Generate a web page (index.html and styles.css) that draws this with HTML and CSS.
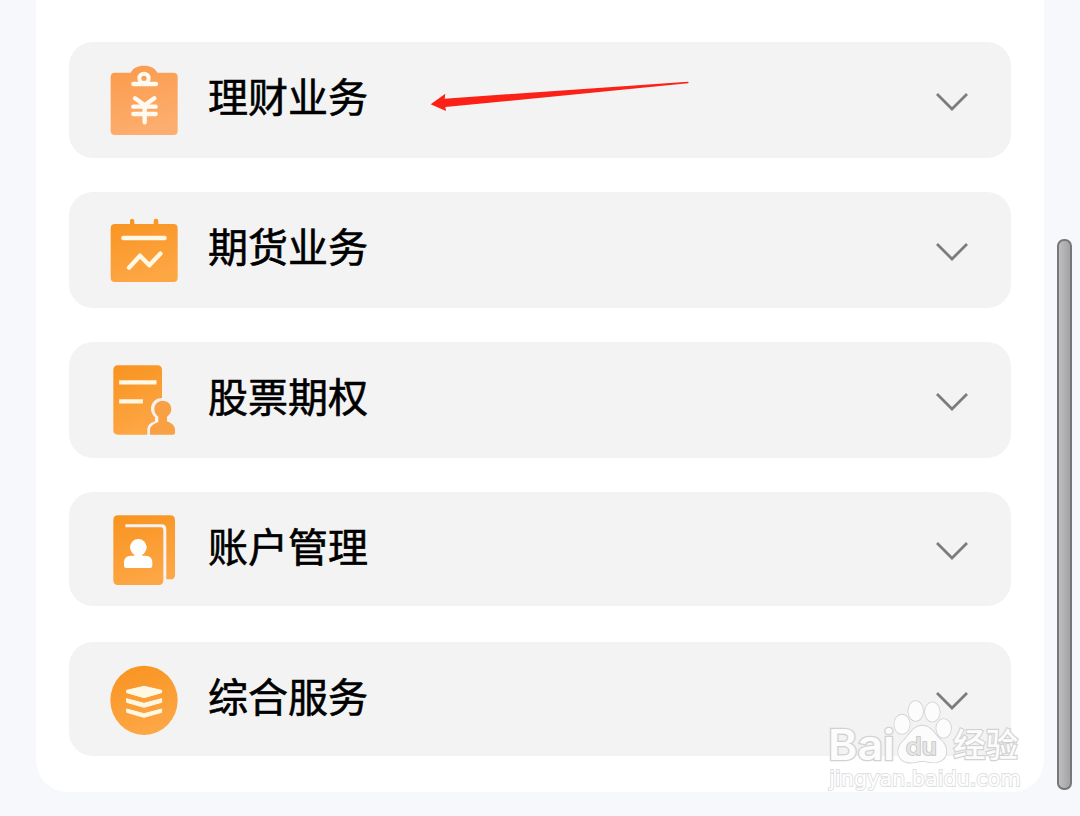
FILE: index.html
```html
<!DOCTYPE html>
<html lang="zh-CN">
<head>
    <meta charset="UTF-8">
    <meta name="viewport" content="width=device-width, initial-scale=1.0">
    <title>业务办理</title>
    <link rel="stylesheet" href="styles.css">
</head>
<body>
    <svg class="defs" width="0" height="0">
        <linearGradient id="orange" x1="0" y1="0" x2="0.3" y2="1">
            <stop offset="0" stop-color="#f8931f"/>
            <stop offset="1" stop-color="#fda644"/>
        </linearGradient>
        <linearGradient id="peach" x1="0" y1="0" x2="0.3" y2="1">
            <stop offset="0" stop-color="#fa9a4b"/>
            <stop offset="1" stop-color="#fdad6e"/>
        </linearGradient>
    </svg>

    <main class="panel">
        <div class="row">
            <svg class="icon" viewBox="0 0 300 270">
                <path fill="url(#peach)" d="M60 53H107C115 38 128 32 147 32S179 38 187 53H235Q248 53 248 66V227Q248 240 235 240H60Q47 240 47 227V66Q47 53 60 53Z"/>
                <g fill="none" stroke="#fffaf0" stroke-linecap="round" stroke-linejoin="round">
                    <circle cx="147" cy="70" r="14" stroke-width="12"/>
                    <path stroke-width="13" d="M115 87H183"/>
                    <path stroke-width="13" d="M120 130L149 151L178 130M115 155H182M115 177H182M149 153V202"/>
                </g>
            </svg>
            <span class="label">理财业务</span>
            <svg class="chevron" viewBox="0 0 34 20"><path d="M2 2L17 17L32 2"/></svg>
        </div>
        <div class="row">
            <svg class="icon" viewBox="0 0 300 270">
                <path fill="url(#orange)" d="M60 57H105V48Q105 41 111 41T118 48V57H176V48Q176 41 183 41T190 48V57H235Q248 57 248 70V218Q248 231 235 231H60Q47 231 47 218V70Q47 57 60 57Z"/>
                <g fill="none" stroke="#fff8e5" stroke-width="13" stroke-linecap="round" stroke-linejoin="round">
                    <path d="M85 99H209"/>
                    <path d="M102 188L135 152L163 181L196 146"/>
                </g>
            </svg>
            <span class="label">期货业务</span>
            <svg class="chevron" viewBox="0 0 34 20"><path d="M2 2L17 17L32 2"/></svg>
        </div>
        <div class="row">
            <svg class="icon" viewBox="0 0 300 270">
                <path fill="url(#orange)" d="M69 31H187Q201 31 201 45V129C182 129 168 143 168 161C168 172 173 180 180 187V199C166 204 157 210 157 225V239H69Q55 239 55 225V45Q55 31 69 31Z"/>
                <path fill="#f9a045" d="M203 137C219 137 229 148 229 162C229 173 223 179 216 185V199C230 205 240 211 240 225V233Q240 239 234 239H165V225C165 213 176 207 190 201V185C183 179 178 173 178 162C178 148 188 137 203 137Z"/>
                <path fill="none" stroke="#fff8e5" stroke-width="13" stroke-linecap="square" d="M79 82H178M79 139H137"/>
            </svg>
            <span class="label">股票期权</span>
            <svg class="chevron" viewBox="0 0 34 20"><path d="M2 2L17 17L32 2"/></svg>
        </div>
        <div class="row row-short">
            <svg class="icon" viewBox="0 0 300 270">
                <path fill="url(#orange)" d="M69 31H226Q240 31 240 45V209Q240 223 226 223H214V73Q214 58 200 58H91V67H197Q205 67 205 76V225Q205 240 191 240H69Q55 240 55 226V45Q55 31 69 31Z"/>
                <circle cx="130" cy="127" r="25" fill="#fff"/>
                <path fill="#fff" d="M118 142H142V152H151Q172 152 172 173V182Q172 189 165 189H94Q87 189 87 182V173Q87 152 109 152H118Z"/>
            </svg>
            <span class="label">账户管理</span>
            <svg class="chevron" viewBox="0 0 34 20"><path d="M2 2L17 17L32 2"/></svg>
        </div>
        <div class="row row-short">
            <svg class="icon" viewBox="0 0 300 270">
                <ellipse cx="147" cy="136" rx="101" ry="104" fill="url(#orange)"/>
                <g fill="#fff8e5" stroke="#fff8e5" stroke-width="3" stroke-linejoin="round">
                    <path d="M95 106L147 94L200 106V113L147 128L95 113Z"/>
                    <path d="M95 131L147 145L200 131V142L147 157L95 142Z"/>
                    <path d="M95 162L147 176L200 162V172L147 187L95 172Z"/>
                </g>
            </svg>
            <span class="label">综合服务</span>
            <svg class="chevron" viewBox="0 0 34 20"><path d="M2 2L17 17L32 2"/></svg>
        </div>
    </main>

    <div class="scrollbar"></div>

    <svg class="arrow" viewBox="0 0 840 150">
        <path d="M32 103L76 71L74 86L804 35Q808 38 804 40L76 111L78 123Z"/>
    </svg>

    <svg class="watermark" viewBox="0 0 690 360">
        <text class="wm-logo" x="54" y="241" textLength="200" lengthAdjust="spacingAndGlyphs">Bai</text>
        <g class="wm-paw">
            <ellipse cx="276" cy="133" rx="23" ry="29"/>
            <ellipse cx="317" cy="93" rx="22" ry="30"/>
            <ellipse cx="367" cy="96" rx="22" ry="29"/>
            <ellipse cx="401" cy="145" rx="22" ry="28"/>
            <path d="M337 137C364 137 374 164 393 181C415 201 417 238 382 246C361 251 350 242 336 243C320 244 311 250 293 247C258 241 259 203 279 184C298 165 310 137 337 137Z"/>
        </g>
        <text class="wm-du" x="287" y="226" textLength="94" lengthAdjust="spacingAndGlyphs">du</text>
        <text class="wm-cn" x="430" y="232" textLength="194" lengthAdjust="spacingAndGlyphs">经验</text>
        <text class="wm-url" x="58" y="318" textLength="574" lengthAdjust="spacingAndGlyphs">jingyan.baidu.com</text>
    </svg>
</body>
</html>
```

FILE: styles.css
```css
body {
    margin: 0;
    height: 816px;
    overflow: hidden;
    display: flex;
    align-items: flex-start;
    background-color: #f6f8fc;
    font-family: "Noto Sans CJK SC", sans-serif;
}

.defs {
    position: absolute;
}

.panel {
    box-sizing: border-box;
    width: 1008px;
    height: 792px;
    margin-left: 36px;
    padding: 42px 33px 0;
    display: flex;
    flex-direction: column;
    gap: 34px;
    background-color: #fff;
    border-radius: 0 0 32px 32px;
}

.row {
    display: flex;
    align-items: flex-start;
    height: 116px;
    flex-shrink: 0;
    background-color: #f3f3f3;
    border-radius: 24px;
}

.row-short {
    height: 114px;
    margin-bottom: 2px;
}

.icon {
    width: 100px;
    height: 90px;
    margin: 13px 13px 0 26px;
}

.label {
    flex: 1;
    margin-top: 23px;
    font-size: 40px;
    line-height: 60px;
    font-weight: 400;
    color: #000;
    -webkit-text-stroke: 0.6px #000;
}

.chevron {
    width: 34px;
    height: 20px;
    margin: 50px 42px 0 0;
    fill: none;
    stroke: #7c7c7c;
    stroke-width: 2.8;
}

.row-short .chevron {
    margin-top: 49px;
}

.scrollbar {
    box-sizing: border-box;
    width: 15px;
    height: 551px;
    margin: 239px 0 0 13px;
    border: 2px solid #777;
    border-radius: 7px;
    background: linear-gradient(to right, #bebec0, #a3a3a5);
}

/* pointer drawn over the first row */
.arrow {
    position: absolute;
    left: 420px;
    top: 70px;
    width: 280px;
    height: 50px;
    fill: #fb2117;
}

.watermark {
    position: absolute;
    left: 810px;
    top: 680px;
    width: 230px;
    height: 120px;
    fill: #fcfcfc;
    stroke: #d2d2d2;
    stroke-width: 5;
    paint-order: stroke;
}

.wm-logo {
    font: 600 126px Inter, sans-serif;
    stroke-width: 8;
}

.wm-paw {
    stroke-width: 5;
}

.wm-du {
    font: 500 72px Inter, sans-serif;
    fill: #e6e6e6;
    stroke: #c4c4c4;
}

.wm-cn {
    font: 500 98px "Noto Sans CJK SC", sans-serif;
    stroke-width: 7;
}

.wm-url {
    font: 66px "DejaVu Sans", sans-serif;
    fill: #fff;
    stroke: #e0e0e2;
    stroke-width: 6;
}
```
